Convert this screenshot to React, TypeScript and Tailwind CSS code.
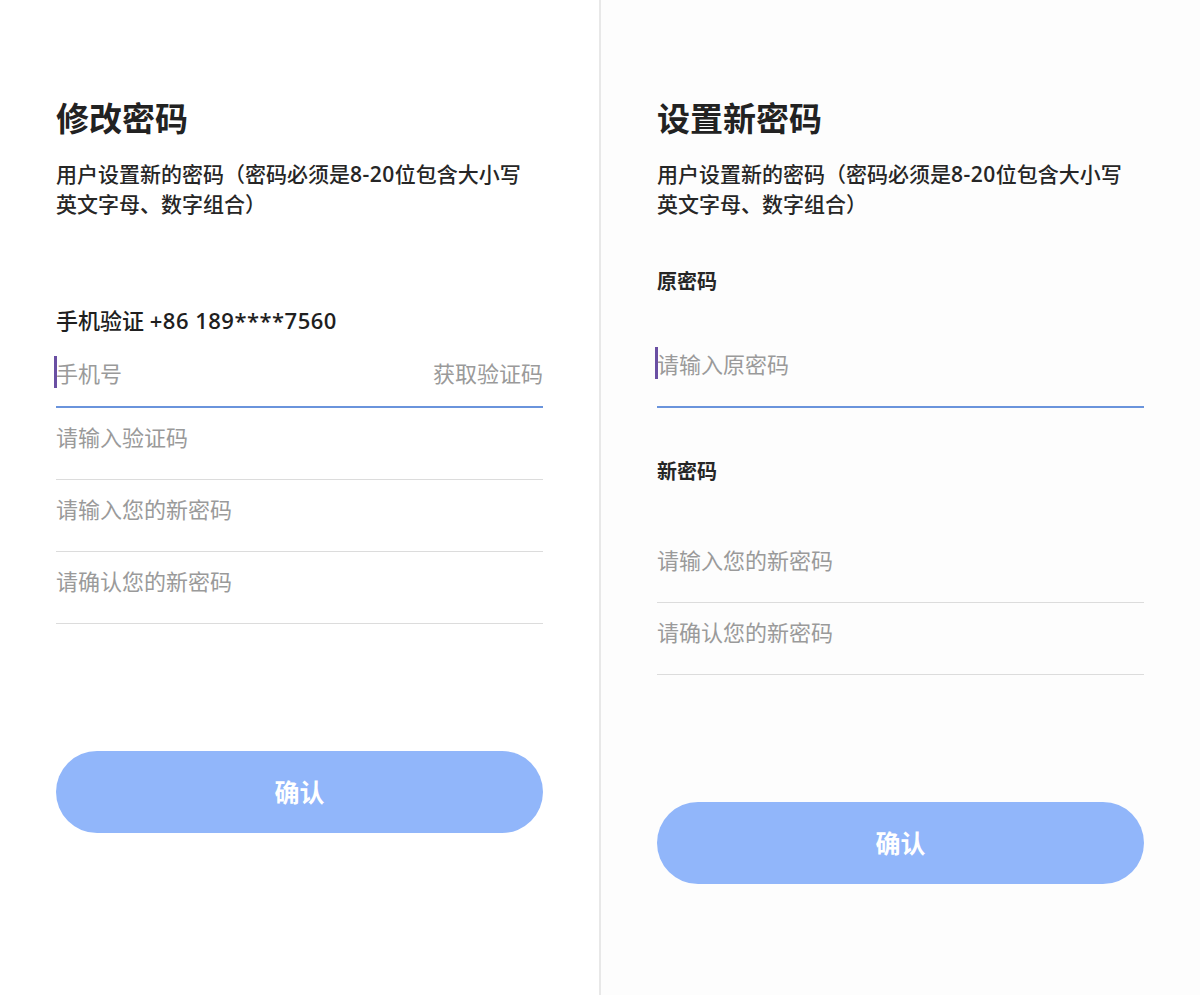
const font = { fontFamily: '"Open Sans", "Noto Sans CJK SC", sans-serif' };

function Cursor() {
  return <span className="absolute -left-[2px] -top-[2px] h-[32px] w-[3px] bg-[#6a4fa3]" />;
}

function Field({ placeholder, focused, action, bottom }: { placeholder: string; focused?: boolean; action?: string; bottom?: string }) {
  return (
    <div
      className={
        focused
          ? `flex items-center justify-between border-b-2 border-[#6a94dc] ${bottom ?? "pb-[27px]"}`
          : "flex items-center justify-between border-b border-[#dcdcdc] pt-[14px] pb-[27px]"
      }
    >
      <span className="relative text-[22px] leading-[30px] text-[#9a9a9a]">
        {focused && <Cursor />}
        {placeholder}
      </span>
      {action && <span className="text-[22px] leading-[30px] text-[#9a9a9a]">{action}</span>}
    </div>
  );
}

function Header({ title }: { title: string }) {
  return (
    <>
      <h1 className="pt-[97px] text-[33px] font-semibold leading-[43px] text-[#222222]">{title}</h1>
      <p className="mt-[19px] text-[21px] font-medium leading-[30px] text-[#262626]">
        用户设置新的密码（密码必须是<span className="font-semibold tracking-[0.5px]">8-20</span>位包含大小写
        <br />
        英文字母、数字组合）
      </p>
    </>
  );
}

function SubmitButton() {
  return (
    <button className="mt-[127px] flex h-[82px] w-full items-center justify-center rounded-full bg-[#91b6fa] pt-[2px] text-[25px] font-semibold text-white">
      确认
    </button>
  );
}

export default function App() {
  return (
    <main className="flex min-h-[995px] w-full bg-white" style={font}>
      <section className="w-[599px] shrink-0 pl-[56px]">
        <div className="w-[487px]">
          <Header title="修改密码" />
          <p className="mt-[86px] text-[22px] font-medium leading-[30px] text-[#1f1f1f]">
            手机验证 <span className="font-semibold tracking-[0.5px]">+86 189****7560</span>
          </p>
          <div className="pt-[23px]">
            <Field placeholder="手机号" focused action="获取验证码" bottom="pb-[18px]" />
          </div>
          <Field placeholder="请输入验证码" />
          <Field placeholder="请输入您的新密码" />
          <Field placeholder="请确认您的新密码" />
          <SubmitButton />
        </div>
      </section>

      <div className="w-[2px] shrink-0 bg-[#e8e8e8]" />

      <section className="flex-1 bg-[#fdfdfd] pl-[56px]">
        <div className="w-[487px]">
          <Header title="设置新密码" />
          <p className="mt-[48px] text-[20px] font-semibold leading-[30px] text-[#262626]">原密码</p>
          <div className="pt-[52px]">
            <Field placeholder="请输入原密码" focused />
          </div>
          <p className="mt-[49px] text-[20px] font-semibold leading-[30px] text-[#262626]">新密码</p>
          <div className="mt-[44px]">
            <Field placeholder="请输入您的新密码" />
            <Field placeholder="请确认您的新密码" />
          </div>
          <SubmitButton />
        </div>
      </section>
    </main>
  );
}
